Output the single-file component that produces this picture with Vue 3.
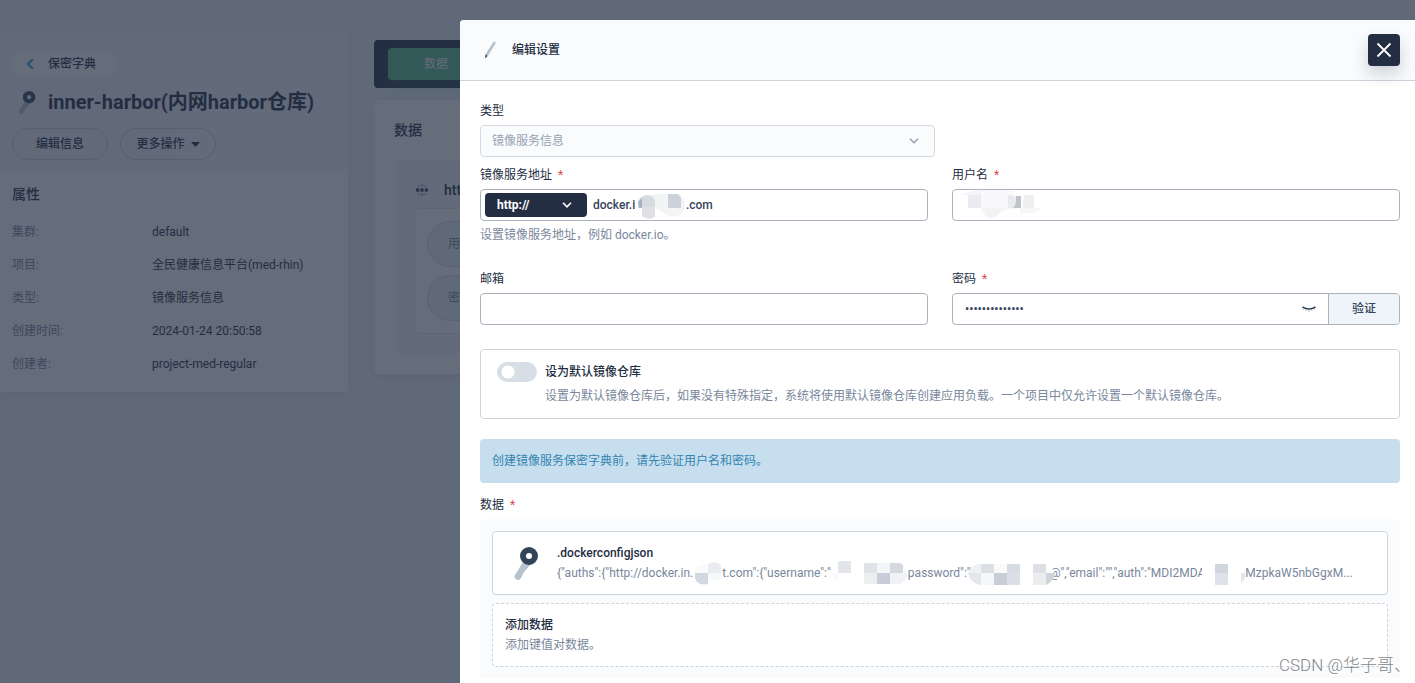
<script setup>
import { ref } from 'vue'

const attributes = [
  { label: '集群:', value: 'default' },
  { label: '项目:', value: '全民健康信息平台(med-rhin)' },
  { label: '类型:', value: '镜像服务信息' },
  { label: '创建时间:', value: '2024-01-24 20:50:58' },
  { label: '创建者:', value: 'project-med-regular' },
]
const secretFields = ['用户名:', '密码:']

const address = ref('docker.i' + '\u00a0'.repeat(17) + '.com')
const username = ref('')
const email = ref('')
const password = ref('00000000000000')
const isDefault = ref(false)
</script>

<template>
  <div class="page">
    <aside class="side">
      <header class="side-head">
        <svg class="pattern" viewBox="0 0 348 142" preserveAspectRatio="none" aria-hidden="true">
          <path fill="#f9fbfd" d="M115 0H200L176 16L348 113V142H297L220 97V142H175V60L116 38L96 12Z" />
          <path fill="#f6f8fb" d="M0 115L45 142H0Z" />
        </svg>
        <a class="back" href="#">
          <svg width="8" height="12" viewBox="0 0 8 12" aria-hidden="true"><path d="M7 1L2 6l5 5" fill="none" stroke="#329dce" stroke-width="2" /></svg>
          保密字典
        </a>
        <h1>
          <svg class="title-key" viewBox="0 0 26 34" aria-hidden="true">
            <path d="M10 16L2 29a3 3 0 0 0 6 3l3-6 7-8z" fill="#b6c2cd" />
            <circle cx="16" cy="10" r="6" fill="none" stroke="#324558" stroke-width="6" />
          </svg>
          inner-harbor(内网harbor仓库)
        </h1>
        <div class="actions">
          <button type="button">编辑信息</button>
          <button type="button">更多操作
            <svg width="9" height="5" viewBox="0 0 9 5" aria-hidden="true"><path d="M0 0h9L4.500 5z" fill="#242e42" /></svg>
          </button>
        </div>
      </header>
      <section class="side-body">
        <h2>属性</h2>
        <dl>
          <div v-for="a in attributes" :key="a.label">
            <dt>{{ a.label }}</dt>
            <dd>{{ a.value }}</dd>
          </div>
        </dl>
      </section>
    </aside>

    <main class="main">
      <nav class="tabs"><a href="#">数据</a></nav>
      <section class="card">
        <h2>数据</h2>
        <div class="secret">
          <h3>
            <svg width="12" height="12" viewBox="0 0 12 12" aria-hidden="true">
              <circle cx="6" cy="6" r="6" fill="#b6c2cd" />
              <path d="M4 0v12M8 0v12M0 3.500h12M0 8.500h12" stroke="#f9fbfd" stroke-width="1" />
              <path d="M0 4.500h3v3H0zM4.500 4.500h3v3h-3zM9 4.500h3v3H9z" fill="#324558" />
            </svg>
            http://
          </h3>
          <div class="secret-box">
            <div v-for="f in secretFields" :key="f" class="secret-row">{{ f }}</div>
          </div>
        </div>
      </section>
    </main>

    <div class="mask"></div>

    <form class="drawer" @submit.prevent>
      <header class="drawer-head">
        <svg width="20" height="20" viewBox="0 0 20 20" aria-hidden="true">
          <path d="M13 2.500l2-1 .8 1.500L7.500 16.500l-2.500-1.500z" fill="#b6c2cd" />
          <path d="M5.500 14.500l2 1.500L5 18.500z" fill="#324558" />
        </svg>
        <h2>编辑设置</h2>
        <button class="close" type="button" aria-label="关闭">
          <svg width="16" height="16" viewBox="0 0 16 16" aria-hidden="true"><path d="M1.500 1.500l13 13M14.500 1.500l-13 13" stroke="#fff" stroke-width="1.800" /></svg>
        </button>
      </header>

      <div class="drawer-body">
        <div class="field">
          <label for="type">类型</label>
          <div class="type-select">
            <select id="type" disabled><option>镜像服务信息</option></select>
            <svg width="10" height="6" viewBox="0 0 10 6" aria-hidden="true"><path d="M1 .8l4 4 4-4" fill="none" stroke="#97a1b1" stroke-width="1.500" /></svg>
          </div>
        </div>

        <div class="grid">
          <div class="field">
            <label for="address">镜像服务地址 <b>*</b></label>
            <div class="control">
              <div class="scheme">
                <select aria-label="协议"><option>http://</option></select>
                <svg width="10" height="6" viewBox="0 0 10 6" aria-hidden="true"><path d="M1 .8l4 4 4-4" fill="none" stroke="#fff" stroke-width="1.600" /></svg>
              </div>
              <div class="address">
                <input id="address" v-model="address" type="text" />
                <svg class="mosaic" width="48" height="26" viewBox="0 0 48 26" aria-hidden="true">
                  <path d="M0 8q2-5 6-6L19 0h22q6 5 6 12t-8 10H30L17 14H0z" fill="#f3f4f6" />
                  <path d="M0 11a9 9 0 0 1 17-5v8H3z" fill="#d6dae1" />
                  <path d="M4 13h13v10q-7 4-13-1z" fill="#dfe1e6" />
                  <path d="M0 8l4-4v10H1z" fill="#aab1bf" />
                  <path d="M30 0h9q4 2 4 5v9H30z" fill="#cdd1da" />
                </svg>
              </div>
            </div>
            <p>设置镜像服务地址，例如 docker.io。</p>
          </div>

          <div class="field">
            <label for="username">用户名 <b>*</b></label>
            <div class="control">
              <input id="username" v-model="username" type="text" />
              <svg class="mosaic user-mosaic" width="80" height="28" viewBox="0 0 80 28" aria-hidden="true">
                <path d="M0 5Q9 0 19 0h26q7 0 9 6v13l-9 1-14 7q-9-3-11-8L6 5z" fill="#f9f9fb" />
                <path d="M0 5Q9 0 19 0v5z" fill="#f4f5f7" />
                <path d="M6 5h13v13H6z" fill="#ebecef" />
                <path d="M19 18h26l-6 3q-4 7-10 7t-10-10z" fill="#f2f3f5" />
                <path d="M46 5q6 0 8 3v6l-3 4h-5z" fill="#e8eaed" />
                <path d="M54 6h5v12h-8q3-3 3-7z" fill="#bfc3ca" />
                <path d="M63 5h9v13H61q-1-8 2-13z" fill="#eeeff1" />
                <path d="M58 18h21q-4 5-11 5h-6l-4 3z" fill="#f7f7f9" />
              </svg>
            </div>
          </div>

          <div class="field">
            <label for="email">邮箱</label>
            <div class="control"><input id="email" v-model="email" type="email" /></div>
          </div>

          <div class="field">
            <label for="password">密码 <b>*</b></label>
            <div class="control">
              <input id="password" v-model="password" type="password" />
              <button class="eye" type="button" aria-label="显示密码">
                <svg width="14" height="8" viewBox="0 0 14 8" aria-hidden="true">
                  <path d="M2 3.500L1 5M4.500 4.500L4 6M7 5v2M9.500 4.500l.5 1.500M12 3.500l1 1.500" stroke="#b6c2cd" />
                  <path d="M.5 2Q7 6 13.500 2" fill="none" stroke="#324558" stroke-width="1.500" />
                </svg>
              </button>
              <button class="verify" type="button">验证</button>
            </div>
          </div>
        </div>

        <div class="default-card">
          <input id="default" v-model="isDefault" type="checkbox" role="switch" />
          <div>
            <label for="default">设为默认镜像仓库</label>
            <p>设置为默认镜像仓库后，如果没有特殊指定，系统将使用默认镜像仓库创建应用负载。一个项目中仅允许设置一个默认镜像仓库。</p>
          </div>
        </div>

        <div class="alert">创建镜像服务保密字典前，请先验证用户名和密码。</div>

        <h3 class="data-title">数据 <b>*</b></h3>
        <div class="data-list">
          <div class="item">
            <svg class="item-key" width="26" height="34" viewBox="0 0 26 34" aria-hidden="true">
              <path d="M10 16L2 29a3 3 0 0 0 6 3l3-6 7-8z" fill="#b6c2cd" />
              <circle cx="16" cy="10" r="6" fill="none" stroke="#324558" stroke-width="6" />
            </svg>
            <div class="item-text">
              <strong>.dockerconfigjson</strong>
              <div class="json">
                <span>{"auths":{"http://docker.in.</span>
                <svg width="29" height="24" viewBox="0 0 29 24" aria-hidden="true">
                  <path d="M2 12Q2 3 15 4v8z" fill="#fafafc" />
                  <path d="M2 12h13v11Q4 25 2 17z" fill="#d3d8e0" />
                  <path d="M15 12V3q4-3 11-1l2 3v7z" fill="#ebecf1" />
                  <path d="M15 12h13v7H15z" fill="#f6f7f9" />
                </svg>
                <span>t.com":{"username":"</span>
                <svg width="77" height="24" viewBox="0 0 77 24" aria-hidden="true">
                  <path d="M7 1q6-2 13-1v12H7z" fill="#e2e5ea" />
                  <path d="M1 12h6v8q-5-2-6-8z" fill="#fafafb" />
                  <path d="M33 2h13v10H33z" fill="#dfe2e7" />
                  <path d="M46 2h13v10H46z" fill="#f4f5f7" />
                  <path d="M59 2h10l3 2v8H59z" fill="#d4d8df" />
                  <path d="M33 12h13v11H33z" fill="#eceef0" />
                  <path d="M46 12h13v11H46z" fill="#c9cdd7" />
                  <path d="M59 12h17q0 8-6 11H59z" fill="#f1f2f5" />
                </svg>
                <span>password":"</span>
                <svg class="wide" width="87" height="24" viewBox="0 0 87 24" aria-hidden="true">
                  <path d="M0 12q3-9 13-9v9z" fill="#eff0f2" />
                  <path d="M13 3h13v9H13z" fill="#dcdfe5" />
                  <path d="M39 3h13v9H39z" fill="#d7dbe2" />
                  <path d="M26 3h13v9H26z" fill="#fafafb" />
                  <path d="M0 12h13v12Q2 22 0 12z" fill="#e3e6eb" />
                  <path d="M13 12h13v12H13z" fill="#f5f6f8" />
                  <path d="M26 12h13v12H26z" fill="#c8ced7" />
                  <path d="M39 12h13v12H39z" fill="#dce0e6" />
                  <path d="M78 3h5l3 9h-8z" fill="#fff" />
                  <path d="M65 3h13v9H65z" fill="#dcdfe6" />
                  <path d="M65 12h13v12H65z" fill="#ecedef" />
                  <path d="M78 12h9q-2 9-9 12z" fill="#d0d4dc" />
                </svg>
                <span>@","email":"","auth":"MDI2MDA</span>
                <svg class="tail" width="43" height="24" viewBox="0 0 43 24" aria-hidden="true">
                  <path d="M0 0h13v24H0z" fill="#fff" />
                  <path d="M13 3h13v9H13z" fill="#d1d6de" />
                  <path d="M13 12h13v12H13z" fill="#dfe2e9" />
                  <path d="M39 12h4v5l-4 6z" fill="#e1e4e9" />
                </svg>
                <span>MzpkaW5nbGgxM...</span>
              </div>
            </div>
          </div>
          <button class="add" type="button">
            <strong>添加数据</strong>
            <span>添加键值对数据。</span>
          </button>
        </div>
      </div>
    </form>

    <div class="watermark">CSDN @华子哥、</div>
  </div>
</template>

<style>
body {
  background: #eff4f9;
}
</style>

<style scoped>
* {
  box-sizing: border-box;
}
.page {
  position: relative;
  display: flex;
  align-items: flex-start;
  gap: 26px;
  height: 100vh;
  overflow: hidden;
  background: #eff4f9;
  color: #242e42;
  font: 12px/20px Roboto, "Noto Sans CJK SC", sans-serif;
}
h1, h2, h3, p, dl, dd {
  margin: 0;
}
button, input, select {
  font: inherit;
  color: inherit;
}
a {
  color: inherit;
  text-decoration: none;
}

.side {
  flex: 0 0 348px;
  margin-top: 30px;
  border-radius: 4px;
  background: #fff;
  box-shadow: 0 4px 8px rgba(36, 46, 66, 0.06);
  overflow: hidden;
}
.side-head {
  position: relative;
  padding: 22px 12px 12px;
  background: #f5f6fa;
}
.side-head > * {
  position: relative;
}
.side-head > .pattern {
  position: absolute;
  inset: 0;
  width: 100%;
  height: 100%;
}
.back {
  display: inline-flex;
  align-items: center;
  gap: 14px;
  height: 24px;
  padding: 0 20px 0 14px;
  border-radius: 12px;
  background: #fff;
  font-weight: 500;
  vertical-align: top;
}
h1 {
  display: flex;
  align-items: center;
  gap: 12px;
  margin: 12px 0;
  padding-left: 6px;
  font-size: 20px;
  font-weight: 700;
  line-height: 28px;
}
.title-key {
  width: 18px;
  height: 24px;
}
.actions {
  display: flex;
  gap: 12px;
}
.actions button {
  display: flex;
  align-items: center;
  justify-content: center;
  gap: 6px;
  width: 96px;
  height: 32px;
  padding: 0;
  border: 1px solid #ccd3db;
  border-radius: 16px;
  background: transparent;
  font-weight: 500;
}
.side-body {
  padding: 12px 12px 18px;
}
.side-body h2,
.card h2 {
  font-size: 14px;
  font-weight: 500;
  line-height: 20px;
}
dl {
  display: grid;
  gap: 13px;
  margin-top: 18px;
}
dl div {
  display: flex;
}
dt {
  width: 140px;
  color: #79879c;
}

.main {
  flex: 1;
  padding: 40px 20px 0 0;
}
.tabs {
  display: flex;
  align-items: center;
  padding: 0 14px;
  height: 48px;
  border-radius: 4px;
  background: #242e42;
}
.tabs a {
  width: 96px;
  height: 32px;
  border-radius: 4px;
  background: #55bc8a;
  color: #fff;
  line-height: 32px;
  text-align: center;
  box-shadow: 0 8px 16px rgba(85, 188, 138, 0.2);
}
.card {
  margin-top: 12px;
  padding: 20px;
  border-radius: 4px;
  background: #fff;
  box-shadow: 0 4px 8px rgba(36, 46, 66, 0.06);
}
.secret {
  margin-top: 20px;
  padding: 20px;
  border-radius: 4px;
  background: #f9fbfd;
}
.secret h3 {
  display: flex;
  align-items: center;
  gap: 16px;
  padding-left: 2px;
  font-size: 14px;
  font-weight: 500;
  line-height: 20px;
}
.secret-box {
  display: grid;
  gap: 8px;
  margin-top: 8px;
  padding: 12px;
  border: 1px solid #e3e9ef;
  border-radius: 4px;
  background: #fff;
}
.secret-row {
  height: 46px;
  padding: 0 20px;
  border: 1px solid #d8dee5;
  border-radius: 23px;
  background: #eff4f9;
  color: #79879c;
  line-height: 44px;
}

.mask {
  position: absolute;
  inset: 0;
  background: rgba(36, 46, 66, 0.7);
}

.drawer {
  position: absolute;
  top: 20px;
  right: 0;
  bottom: 0;
  left: 460px;
  border-radius: 4px 0 0 0;
  background: #fff;
  overflow: hidden;
}
.drawer-head {
  display: flex;
  align-items: center;
  gap: 12px;
  height: 61px;
  padding: 0 15px 0 20px;
  border-bottom: 1px solid #ccd3db;
  background: #f9fbfd;
}
.drawer-head h2 {
  flex: 1;
  font-size: 12px;
  font-weight: 500;
}
.close {
  display: grid;
  place-items: center;
  width: 32px;
  height: 32px;
  padding: 0;
  border: 0;
  border-radius: 4px;
  background: #242e42;
  box-shadow: 0 8px 16px rgba(36, 46, 66, 0.2);
}
.drawer-body {
  padding: 20px 15px 5px 20px;
}
.field > label {
  display: block;
  margin-bottom: 4px;
}
b {
  margin-left: 3px;
  color: #dd4b45;
  font-weight: 400;
}
select {
  appearance: none;
  width: 100%;
  border-radius: 4px;
  outline: 0;
}
.type-select {
  position: relative;
  width: calc(50% - 5px);
  height: 32px;
}
.type-select select {
  height: 32px;
  padding: 0 11px;
  border: 1px solid #d4dae1;
  background: #f9fbfd;
  color: #97a1b1;
  opacity: 1;
}
.type-select svg {
  position: absolute;
  top: 13px;
  right: 16px;
}
.grid {
  display: grid;
  grid-template-columns: 1fr 1fr;
  gap: 24px;
  margin-top: 8px;
}
.control {
  position: relative;
  display: flex;
  align-items: center;
  height: 32px;
  border: 1px solid #abb4be;
  border-radius: 4px;
  background: #fff;
  overflow: hidden;
}
.control input {
  flex: 1;
  width: 100%;
  min-width: 0;
  height: 30px;
  padding: 0 12px;
  border: 0;
  outline: 0;
  background: transparent;
  color: #36435c;
  font-weight: 500;
}
.scheme {
  position: relative;
  width: 102px;
  height: 24px;
  margin-left: 4px;
}
.scheme select {
  height: 24px;
  padding: 0 12px;
  border: 0;
  background: #242e42;
  color: #fff;
  font-weight: 700;
}
.scheme svg {
  position: absolute;
  top: 9px;
  right: 15px;
}
.address {
  position: relative;
  flex: 1;
}
.address input {
  display: block;
  padding: 0 6px;
}
.mosaic {
  position: absolute;
  top: 4px;
  left: 51px;
  pointer-events: none;
}
.user-mosaic {
  top: 0;
  left: 9px;
}
.field p {
  margin-top: 4px;
  color: #79879c;
}
.eye {
  display: flex;
  margin: 0 12px;
  padding: 0;
  border: 0;
  background: transparent;
}
.verify {
  width: 71px;
  height: 30px;
  padding: 0;
  border: 0;
  border-left: 1px solid #abb4be;
  background: #eff4f9;
  color: #36435c;
  font-weight: 500;
}
.default-card {
  display: flex;
  gap: 8px;
  margin-top: 24px;
  padding: 12px 16px;
  border: 1px solid #ccd3db;
  border-radius: 4px;
}
.default-card input {
  appearance: none;
  flex: none;
  width: 40px;
  height: 20px;
  margin: 0;
  border-radius: 10px;
  background: radial-gradient(circle at 11px 10px, #fff 6px, #d8dee5 7px);
}
.default-card label {
  display: block;
  font-weight: 500;
}
.default-card p {
  margin-top: 4px;
  color: #79879c;
}
.alert {
  margin-top: 20px;
  padding: 12px;
  border-radius: 4px;
  background: #c7deef;
  color: #3385b0;
}
.data-title {
  margin-top: 12px;
  font-size: 12px;
  font-weight: 400;
}
.data-list {
  display: grid;
  gap: 8px;
  margin-top: 4px;
  padding: 12px 12px 11px;
  border-radius: 4px;
  background: #f9fbfd;
}
.item {
  display: flex;
  align-items: center;
  gap: 18px;
  height: 64px;
  padding: 0 20px;
  border: 1px solid #ccd3db;
  border-radius: 4px;
  background: #fff;
}
.item-text {
  min-width: 0;
}
strong {
  display: block;
  font-weight: 500;
}
.json {
  display: flex;
  align-items: center;
  height: 20px;
  color: #79879c;
  white-space: nowrap;
}
.json svg,
.item-key {
  flex: none;
}
.json svg {
  position: relative;
}
.json .wide {
  margin: 0 -5px 0 -3px;
}
.json .tail {
  margin-left: -3px;
}
.add {
  height: 64px;
  padding: 0 12px;
  border: 1px dashed #ccd3db;
  border-radius: 4px;
  background: #fff;
  text-align: left;
}
.add span {
  color: #79879c;
}
.watermark {
  position: absolute;
  right: 4px;
  bottom: 6px;
  color: #86888b;
  font: 300 17px/24px Roboto, "Noto Sans CJK SC", sans-serif;
  text-shadow: 1px 1px 0 rgba(255, 255, 255, 0.8);
}
</style>
